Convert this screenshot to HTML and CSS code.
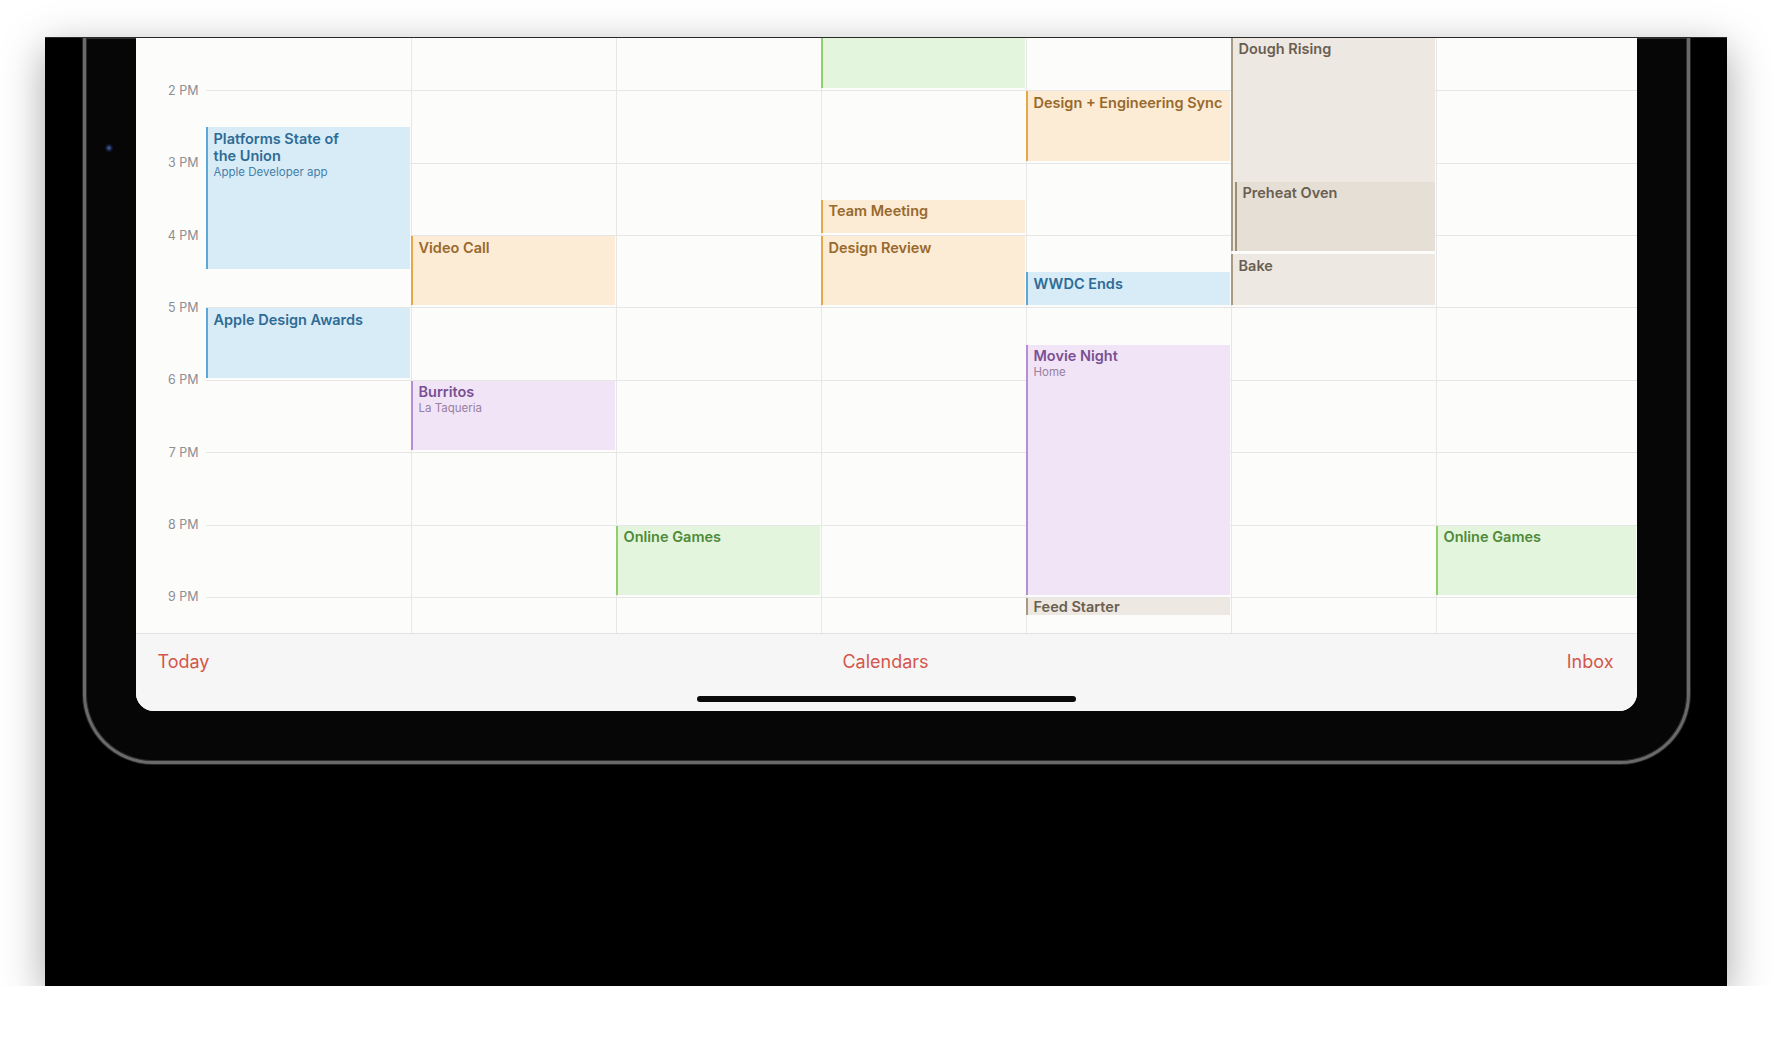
FILE: index.html
```html
<!DOCTYPE html>
<html lang="en">
<head>
<meta charset="utf-8">
<title>Calendar – Week</title>
<link rel="stylesheet" href="styles.css">
</head>
<body>
<div class="stage">
  <div class="device">
    <span class="camera"></span>
    <div class="screen">
      <div class="cal">
        <div class="grid">
          <div class="daybg" style="grid-column:3"></div>
          <div class="daybg" style="grid-column:4"></div>
          <div class="daybg" style="grid-column:5"></div>
          <div class="daybg" style="grid-column:6"></div>
          <div class="daybg" style="grid-column:7"></div>
          <div class="daybg" style="grid-column:8"></div>

          <div class="hline" style="grid-row:5"></div>
          <div class="hline" style="grid-row:9"></div>
          <div class="hline" style="grid-row:13"></div>
          <div class="hline" style="grid-row:17"></div>
          <div class="hline" style="grid-row:21"></div>
          <div class="hline" style="grid-row:25"></div>
          <div class="hline" style="grid-row:29"></div>
          <div class="hline" style="grid-row:33"></div>

          <div class="hlabel" style="grid-row:5">2 PM</div>
          <div class="hlabel" style="grid-row:9">3 PM</div>
          <div class="hlabel" style="grid-row:13">4 PM</div>
          <div class="hlabel" style="grid-row:17">5 PM</div>
          <div class="hlabel" style="grid-row:21">6 PM</div>
          <div class="hlabel" style="grid-row:25">7 PM</div>
          <div class="hlabel" style="grid-row:29">8 PM</div>
          <div class="hlabel" style="grid-row:33">9 PM</div>

          <div class="ev blue" style="grid-area:7/2/15/3"><span class="title">Platforms State of<br>the Union</span><span class="sub">Apple Developer app</span></div>
          <div class="ev blue" style="grid-area:17/2/21/3"><span class="title">Apple Design Awards</span></div>

          <div class="ev orange" style="grid-area:13/3/17/4"><span class="title">Video Call</span></div>
          <div class="ev purple" style="grid-area:21/3/25/4"><span class="title">Burritos</span><span class="sub">La Taqueria</span></div>

          <div class="ev green" style="grid-area:29/4/33/5"><span class="title">Online Games</span></div>

          <div class="ev green" style="grid-area:1/5/5/6"></div>
          <div class="ev orange" style="grid-area:11/5/13/6"><span class="title">Team Meeting</span></div>
          <div class="ev orange" style="grid-area:13/5/17/6"><span class="title">Design Review</span></div>

          <div class="ev orange" style="grid-area:5/6/9/7"><span class="title">Design + Engineering Sync</span></div>
          <div class="ev blue" style="grid-area:15/6/17/7"><span class="title">WWDC Ends</span></div>
          <div class="ev purple" style="grid-area:19/6/33/7"><span class="title">Movie Night</span><span class="sub">Home</span></div>
          <div class="ev beige short" style="grid-area:33/6/34/7"><span class="title">Feed Starter</span></div>

          <div class="ev beige" style="grid-area:2/7/14/8"><span class="title">Dough Rising</span></div>
          <div class="ev beige overlap" style="grid-area:10/7/14/8"><span class="title">Preheat Oven</span></div>
          <div class="ev beige" style="grid-area:14/7/17/8"><span class="title">Bake</span></div>

          <div class="ev green" style="grid-area:29/8/33/9"><span class="title">Online Games</span></div>
        </div>
      </div>
      <div class="toolbar">
        <div class="tabs">
          <span class="tab tab-left">Today</span>
          <span class="tab tab-center">Calendars</span>
          <span class="tab tab-right">Inbox</span>
        </div>
        <div class="home-indicator"></div>
      </div>
    </div>
  </div>
</div>
</body>
</html>
```

FILE: styles.css
```css
* { box-sizing: border-box; }

html, body {
  margin: 0;
  background: #ffffff;
}

body {
  font-family: Inter, "Noto Sans", "Liberation Sans", sans-serif;
  overflow: hidden;
}

.stage {
  margin: 37px 0 0 45px;
  width: 1682px;
  height: 949px;
  background: #000;
  border-top: 1px solid #2a2a2a;
  box-shadow: 0 12px 40px rgba(0, 0, 0, 0.35);
  padding: 0 37.5px;
  overflow: hidden;
}

.device {
  position: relative;
  height: 726px;
  background: #060606;
  border: 3px solid #6a6a6a;
  border-top: 0;
  border-radius: 0 0 70px 70px;
  box-shadow: 0 0 0 1px #262626, inset 0 0 0 1px #2e2e2e;
  padding: 0 50px 50px;
}

.camera {
  position: absolute;
  left: 19px;
  top: 106px;
  width: 8px;
  height: 8px;
  border-radius: 50%;
  background: radial-gradient(circle at 50% 50%, #3b5488 0 1.2px, #16223f 2.2px, #0a1020 4px);
}

.screen {
  height: 673px;
  background: #fcfcfb;
  border-radius: 0 0 18px 18px;
  overflow: hidden;
  display: flex;
  flex-direction: column;
}

.cal {
  flex: none;
  height: 595.3px;
  overflow: hidden;
}

.grid {
  display: grid;
  grid-template-columns: 70px repeat(6, 205px) 1fr;
  grid-template-rows: repeat(34, 18.1px);
  margin-top: -20.1px;
}

.daybg {
  grid-row: 1 / -1;
  border-left: 1px solid #e7e7e7;
}

.hline {
  grid-column: 2 / -1;
  align-self: start;
  height: 0;
  border-top: 1px solid #e6e6e6;
}

.hlabel {
  grid-column: 1;
  align-self: start;
  margin-top: -7.5px;
  height: 16px;
  line-height: 16px;
  font-size: 12.5px;
  color: #8e8e93;
  text-align: right;
  padding-right: 7px;
  white-space: nowrap;
}

.ev {
  margin: 1px 1px 2px 0;
  border-left: 2px solid;
  padding: 2.5px 6px 0 6px;
  overflow: hidden;
  min-width: 0;
  min-height: 0;
  font-size: 14.5px;
  line-height: 17px;
  font-weight: 600;
}

.ev .title {
  display: block;
  white-space: nowrap;
}

.ev .sub {
  display: block;
  margin-top: 1px;
  font-size: 11.5px;
  line-height: 15px;
  font-weight: 400;
}

.ev.short {
  padding-top: 0;
  margin-bottom: 0;
}

.ev.overlap {
  margin-left: 4px;
}

.blue {
  background: #d8ecf8;
  border-color: #5aa7d8;
  color: #2f6b94;
}
.blue .sub { color: #4580a8; }

.orange {
  background: #fcebd5;
  border-color: #e6a64a;
  color: #98692c;
}

.purple {
  background: #f1e4f7;
  border-color: #b78ed4;
  color: #7a5092;
}
.purple .sub { color: #98809f; }

.green {
  background: #e3f5dc;
  border-color: #8fd06c;
  color: #4f8a3a;
}

.beige {
  background: #ede8e2;
  border-color: #a89a82;
  color: #6a5e51;
}

.beige.overlap {
  background: #e5dfd6;
  border-color: #9d8d72;
}

.toolbar {
  flex: 1;
  background: #f6f6f6;
  border-top: 1px solid #e2e2e2;
  display: flex;
  flex-direction: column;
}

.tabs {
  height: 55.4px;
  display: grid;
  grid-template-columns: 1fr auto 1fr;
  align-items: center;
  padding: 0 23px 0 22px;
  font-size: 18px;
  color: #d4574b;
}

.tab-left { justify-self: start; }
.tab-center { justify-self: center; }
.tab-right { justify-self: end; }

.home-indicator {
  align-self: center;
  width: 379px;
  height: 6.5px;
  margin-top: 6.3px;
  border-radius: 4px;
  background: #0a0a0a;
}
```
